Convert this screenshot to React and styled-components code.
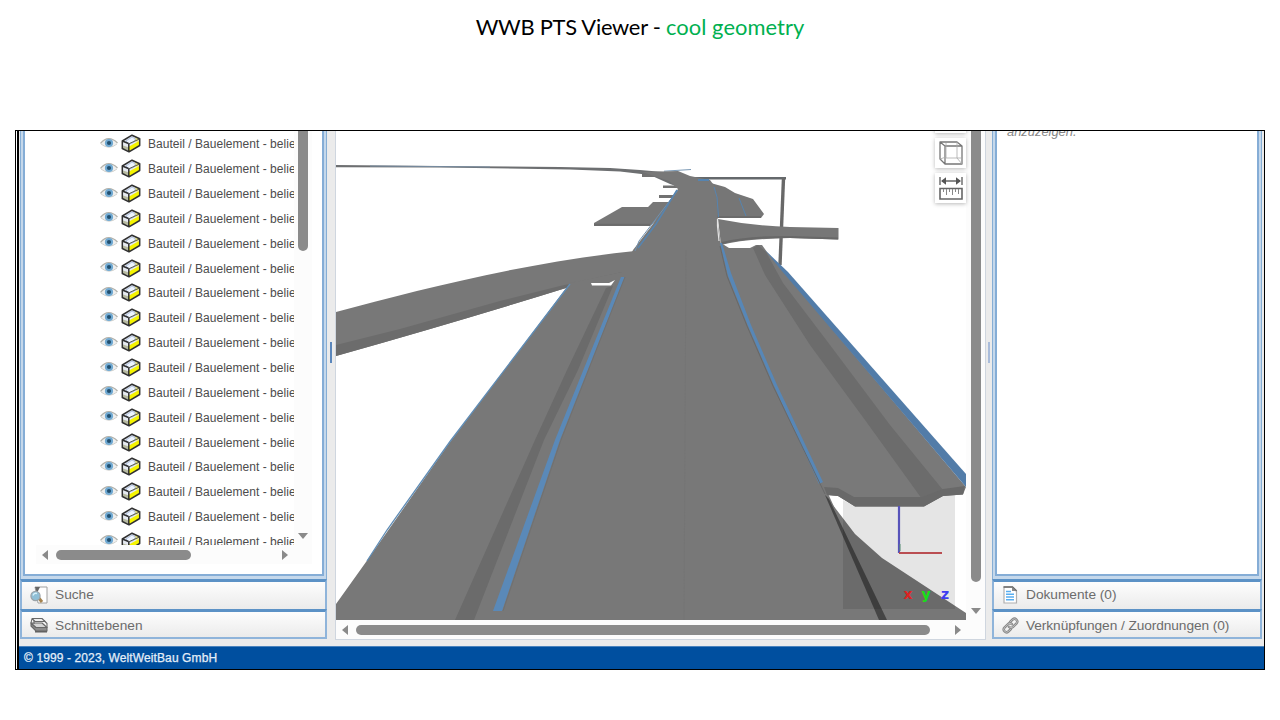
import React from "react";
import styled, { createGlobalStyle } from "styled-components";

const Global = createGlobalStyle`
  * { box-sizing: border-box; }
  body { margin: 0; background: #fff; overflow: hidden; font-family: "Liberation Sans", Arial, sans-serif; }
`;
const Slide = styled.main`
  width: 1280px; height: 720px; display: flex; flex-direction: column; align-items: center;
  padding-top: 11px; background: #fff;
`;
const Title = styled.h1`
  margin: 0 0 87px; height: 32px; font: 400 21.9px/31px Lato, Carlito, sans-serif;
  color: #000; white-space: nowrap; letter-spacing: -0.26px;
  span { color: #00b050; letter-spacing: 0.06px; }
`;
const Frame = styled.section`
  width: 1250px; height: 540px; border: 1px solid #000; display: flex; padding-left: 1px; overflow: hidden;
`;
const Portal = styled.div`
  flex: 1; min-width: 0; border-left: 2px solid #000; display: flex; flex-direction: column; background: #ebebeb;
`;
const Workspace = styled.div`height: 515px; display: flex; padding-left: 1px; background: #ebebeb;`;
const Footer = styled.footer`
  flex: 1; background: #004f9f; border-top: 1px solid #4b83bd; color: #e4eef8; font-size: 12px;
  line-height: 22px; padding-left: 5px; white-space: nowrap; letter-spacing: 0.11px;
  -webkit-text-stroke: 0.25px #e4eef8;
`;
const Side = styled.aside`width: ${(p) => p.$w}px; height: 508px; display: flex; flex-direction: column;`;
const Pane = styled.div`
  height: 448px; border: 1px solid #86aed5; border-top: 0; border-bottom: 0; background: #c5d8eb; padding: 0 2px 3px;
`;
const PaneInner = styled.div`
  height: 100%; border: 2px solid #85add6; border-top: 0; background: #fff; overflow: hidden;
`;
const Bar = styled.div`
  height: 30px; border: 2px solid #8fb4da; border-top: 3px solid #5c92c6; border-bottom: 0;
  background: linear-gradient(#fdfdfd, #ebebeb); display: flex; align-items: center; color: #6c6c6c;
  font-size: 13.7px; padding: 0 0 2px 8px; gap: ${(p) => p.$gap || 7}px; white-space: nowrap;
  letter-spacing: ${(p) => p.$ls || 0}px;
  &:last-child { border-bottom: 2px solid #8fb4da; padding-bottom: 0; padding-top: 1px; }
  svg { flex: none; }
`;
const TreeArea = styled.div`display: flex; height: 414px; padding-left: 75px;`;
const TreeList = styled.div`width: 194px; height: 414px; overflow: hidden; padding-top: 1px;`;
const TreeRow = styled.div`
  height: 24.85px; display: flex; align-items: center; white-space: nowrap; font-size: 12px; color: #4c4c4c;
  letter-spacing: 0.03px;
`;
const Eye = styled.svg`flex: none; width: 18px; height: 16px; margin-right: 3px; margin-top: -3px;`;
const Box = styled.svg`flex: none; width: 20px; height: 19px; margin: -1px 7px 0 0;`;
const VTrack = styled.div`
  width: ${(p) => p.$w || 18}px; background: #fcfcfc; display: flex; flex-direction: column; align-items: center;
  justify-content: space-between; padding-bottom: ${(p) => p.$pb || 6}px; padding-left: ${(p) => p.$pl || 0}px;
`;
const VThumb = styled.div`width: 10px; height: ${(p) => p.$h}px; background: #8b8b8b; border-radius: 0 0 5px 5px;`;
const HTrack = styled.div`
  height: ${(p) => p.$h}px; display: flex; align-items: center; background: #fcfcfc; margin-left: ${(p) => p.$ml || 0}px;
  width: ${(p) => p.$w}px; padding-left: 6px;
`;
const HThumb = styled.div`
  width: ${(p) => p.$w}px; height: 10px; border-radius: 5px; background: #8b8b8b; margin: 0 ${(p) => p.$mr}px 0 8px;
`;
const Arrow = styled.i`
  width: 0; height: 0; flex: none; border: 5px solid transparent;
  ${(p) => p.$d === "left" && "border-left: 0; border-right: 6px solid #8a8a8a;"}
  ${(p) => p.$d === "right" && "border-right: 0; border-left: 6px solid #8a8a8a;"}
  ${(p) => p.$d === "down" && "border-bottom: 0; border-top: 6px solid #8a8a8a;"}
`;
const Splitter = styled.div`
  width: ${(p) => p.$w}px; height: 100%; background: #ebebeb; display: flex; justify-content: center; padding-top: 211px;
`;
const Handle = styled.div`width: 2px; height: 21px; background: ${(p) => p.$c};`;
const Viewer = styled.div`
  width: 651px; height: 509px; background: #fff; border: 1px solid #cfd6df; border-top: 0; position: relative;
`;
const ViewRow = styled.div`display: flex; height: 489px;`;
const Tools = styled.div`
  position: absolute; left: 599px; top: -28px; display: flex; flex-direction: column; gap: 5px;
`;
const Tool = styled.button`
  width: 31px; height: 30px; padding: 0; border: 0; background: #fff; box-shadow: 0 1px 4px rgba(0,0,0,.28);
  display: flex; align-items: center; justify-content: center;
`;
const Hint = styled.p`
  margin: -9px 0 0 10px; font-size: 12.9px; line-height: 20px; font-style: italic; color: #868686;
`;

const EyeIcon = () => (
  <Eye viewBox="0 0 18 16">
    <path d="M.5 8.4Q9-.8 17.5 8Q9 15.5 .5 8.4Z" fill="#efefee" />
    <path d="M.5 8.4Q8.5-1 17.5 8" fill="none" stroke="#b2b2ac" strokeWidth="1.3" />
    <path d="M1 9Q9 15.5 17 9" fill="none" stroke="#d2d2ce" />
    <circle cx="9" cy="8" r="4.1" fill="#70a9d2" />
    <circle cx="9" cy="8" r="2.1" fill="#23506f" />
  </Eye>
);
const BoxIcon = () => (
  <Box viewBox="0 0 20 19">
    <path d="M1.2 7L11 1L18.8 4.8V11.5L8 18L1.2 14.5Z" fill="#e6eaf1" />
    <path d="M8 12.5L18.5 6.8V11.5L8 17.5Z" fill="#f5f400" />
    <path d="M2 11.5L8 13.5V17.5L2 14.5Z" fill="#b7baa2" />
    <path d="M12 7L15 2.8L18.5 5L17 8Z" fill="#eee783" />
    <path d="M5 7L11 3L14.5 5L12.5 8.5L8 10Z" fill="#edf4ff" stroke="#9aafd4" strokeWidth=".7" />
    <path d="M1.3 7L11 1.2L18.7 4.8V11.5L8 17.8L1.3 14.5ZM1.3 7L7.5 9.5M7.8 9.5V17.5" fill="none" stroke="#303030" strokeWidth="1.5" strokeLinejoin="round" />
    <path d="M7.8 9.8L18.5 5" stroke="#55564c" />
  </Box>
);
const SearchIcon = () => (
  <svg width="18" height="18" viewBox="0 0 18 18">
    <path d="M5 1H17V17H8Z" fill="#fff" stroke="#a0a0a0" />
    <path d="M5 1H10L7 7Z" fill="#666" />
    <path d="M8 11L12 16" stroke="#a5834f" strokeWidth="3" />
    <circle cx="5.5" cy="10" r="4.6" fill="#8fbfd6" stroke="#9ba3a8" strokeWidth="1.2" />
    <path d="M3 9.5Q4 6.5 7 7.5" stroke="#d8f2fb" strokeWidth="1.4" fill="none" />
  </svg>
);
const LayersIcon = () => (
  <svg width="18" height="16" viewBox="0 0 18 16" fill="none" stroke="#686868" strokeWidth="1.1" strokeLinejoin="round">
    <path d="M1 6V9L6 14H17V10.5H6Z" fill="#8b8b8b" />
    <path d="M6 10.5L1 6H12L17 10.5Z" fill="#d5d5d5" />
    <path d="M4 7V3.5H14L17 6.5V10.5" />
    <path d="M1 6L2 1.5H12L15 4.5H5L2 1.5" fill="#eee" />
    <path d="M5 14.8H17" stroke="#5a5a5a" strokeWidth="1.4" />
  </svg>
);
const DocumentIcon = () => (
  <svg width="16" height="18" viewBox="0 0 16 18">
    <path d="M2 1H10.5L14.5 4.5V17H2Z" fill="#fff" stroke="#b0b0b0" strokeWidth="1.2" />
    <path d="M1.5 1H10.5L14.5 5" stroke="#666" strokeWidth="1.4" fill="none" />
    <path d="M10 1V5H14" fill="#888" />
    <path d="M4 5.5H9M4 8.3H12M4 11H12M4 13.7H12" stroke="#59aef0" strokeWidth="1.6" />
  </svg>
);
const LinkIcon = () => (
  <svg width="17" height="17" viewBox="0 0 24 24" fill="none" strokeLinecap="round" strokeLinejoin="round">
    <g stroke="#888" strokeWidth="3.6"><path d="M10 14a4 4 0 0 0 5.5 0l5-5a3.9 3.9 0 0 0-5.5-5.5l-3.5 3.5M14 10a4 4 0 0 0-5.5 0l-5 5a3.9 3.9 0 0 0 5.5 5.5l3.5-3.5" /></g>
    <g stroke="#ddd" strokeWidth=".9"><path d="M10 14a4 4 0 0 0 5.5 0l5-5a3.9 3.9 0 0 0-5.5-5.5l-3.5 3.5M14 10a4 4 0 0 0-5.5 0l-5 5a3.9 3.9 0 0 0 5.5 5.5l3.5-3.5" /></g>
  </svg>
);
const CubeIcon = () => (
  <svg width="24" height="24" viewBox="0 0 24 24" fill="none" stroke="#777" strokeLinejoin="round">
    <path d="M1 1H18L23 5V23H6L1 18ZM1 1L6 5H23M6 5V23" strokeWidth="1.3" />
    <path d="M7 2V17H22M1 18L7 16M18 1V17L23 23" stroke="#aaa" strokeWidth=".8" />
  </svg>
);
const MeasureIcon = () => (
  <svg width="24" height="24" viewBox="0 0 24 24" fill="none" stroke="#666">
    <path d="M1 1V9M23 1V9M3 5H21" strokeWidth="1.4" />
    <path d="M2 5L7 1.2V8.8ZM22 5L17 1.2V8.8Z" fill="#555" stroke="none" />
    <path d="M1 12.5H23V23H1Z" strokeWidth="1.6" />
    <path d="M4.5 13V16M7.5 13V19M10.5 13V16M13.5 13V19M16.5 13V16M19.5 13V18" stroke="#888" />
  </svg>
);

const Scene = () => (
  <svg width="630" height="489" viewBox="336 131 630 489">
    <path d="M336 165L440 166L560 167L610 168L640 170L663 172L682 188L670 184L650 175L620 171.5L570 169.5L440 167.5L336 167.3Z" fill="#6d6f71" />
    <path d="M370 166L490 167" stroke="#7893ad" strokeWidth=".8" />
    <path d="M642 174H666V177H642ZM663 185.5H680V188H663ZM659 195H678V198H659Z" fill="#717171" />
    <path d="M664 171.2L691 169.5" stroke="#7b99b5" />
    <path d="M690 178.3H786" stroke="#65696c" strokeWidth="2.4" />
    <path d="M783.5 178L780 265" stroke="#686868" strokeWidth="3.4" />
    <path d="M594 223L622 207H648L653 202H675L650 226H594Z" fill="#777" />
    <path d="M594 224.8H650" stroke="#6b6b6b" strokeWidth="2" />
    <path d="M700 180L725 187L735 193L753 199L764 214L761 218H745L716 217Z" fill="#767676" />
    <path d="M716 217H761" stroke="#6b6b6b" strokeWidth="2" />
    <path d="M739 198L746 216" stroke="#5684ae" />
    <path d="M718 219Q753 226 790 227L838.5 228V239.5L790 238Q745 239 721 245Z" fill="#777" />
    <path d="M722 243Q748 236.5 790 237L838 238.5" stroke="#686868" strokeWidth="2" fill="none" />
    <path d="M336 312C415 291 520 263 635 251L632 278L566 288Q460 321 336 356Z" fill="#787878" />
    <path d="M336 345L400 329L500 301L560 286L622 272V280L566 288Q460 321 336 356Z" fill="#6c6c6c" />
    <path d="M826 496L855 534L882 558L966 613V620H836L780 500Z" fill="#777" />
    <path d="M642 172L678 171L690 176L710 180L716 188L718 225L721 245L732 275L750 325L825 487L886 620H336V604L366 562L380 542L450 442L570 283L622 272L633 250L650 228L678 189L669 181Z" fill="#787878" />
    <path d="M686 250L684 620" stroke="#757575" strokeWidth="1" />
    <path d="M635 251L639 241L678 190" fill="none" stroke="#7090ae" />
    <path d="M638 248L656 224L677 190" fill="none" stroke="#5684b0" strokeWidth="1.5" />
    <path d="M698 180H709" stroke="#5684b0" strokeWidth="2" />
    <path d="M714 187L717 197L718.5 217" fill="none" stroke="#5684b0" />
    <path d="M717.5 219V226L719 241" fill="none" stroke="#e5e5e5" strokeWidth="1.2" />
    <path d="M591 283H609L615 280L611 285.4H592Z" fill="#fff" />
    <path d="M455 620L535 440L567 370L606 288L613 286L578 370L544 440L474 620Z" fill="#6b6b6b" />
    <path d="M493 611H502L560 440L624.5 277H621L555 440Z" fill="#5a89b8" />
    <path d="M503 611L561 440L625 277" fill="none" stroke="#6e6e6e" strokeWidth=".8" />
    <path d="M570 284L450 441.5L387 530L367 561" fill="none" stroke="#5f8cb5" strokeWidth="1.3" />
    <path d="M721 243L729 248H750L756 245H762L767 252L966 487L963 494.5L943 496L924 506.5H855L838 496L827 495L822 484L774 386L748 326L728 276Z" fill="#797979" />
    <path d="M753 248L758 245L766 252L783 283L830 345L890 425L943 490L922 499L865 420L810 345L765 275Z" fill="#6c6c6c" />
    <path d="M824 487L838 488L854 497H922L943 489L965 486L963 494.5L943 496L924 506.5H855L838 496L827 495Z" fill="#696969" />
    <path d="M765 250L788 272L966 474V487L781 270Z" fill="#527ca8" />
    <path d="M720 243L722 243L731 273L751 325L777 385L823 482L819 484L774 386L748 326L728 276Z" fill="#5787b7" />
    <path d="M720 246L727 276L747 326L773 386L825 494" stroke="#686868" strokeWidth="1" fill="none" />
    <path d="M825 495L829 499L887 620H879Z" fill="#454545" />
    <path d="M843 500L855 506.5H924L943 496L955 495.3V609H843Z" fill="rgba(0,0,0,.1)" />
    <path d="M899 506V553" stroke="#5753ba" strokeWidth="2.2" />
    <path d="M900 544V551" stroke="#5b9471" />
    <path d="M899 553H942" stroke="#ba4e52" strokeWidth="2" />
    <g fontFamily="DejaVu Sans" fontSize="14" fontWeight="700" textAnchor="middle">
      <text x="908" y="599" fill="#dc2222">x</text>
      <text x="926" y="599" fill="#16e116">y</text>
      <text x="945" y="599" fill="#3d3df0">z</text>
    </g>
  </svg>
);

export default function App() {
  return (
    <Slide>
      <Global />
      <Title>WWB PTS Viewer - <span>cool geometry</span></Title>
      <Frame>
        <Portal>
          <Workspace>
            <Side $w={307}>
              <Pane><PaneInner>
                <TreeArea>
                  <TreeList>
                    {Array.from({ length: 17 }, (_, i) => (
                      <TreeRow key={i}><EyeIcon /><BoxIcon />Bauteil / Bauelement - belie</TreeRow>
                    ))}
                  </TreeList>
                  <VTrack><VThumb $h={120} /><Arrow $d="down" /></VTrack>
                </TreeArea>
                <HTrack $h={19} $w={276} $ml={11}>
                  <Arrow $d="left" /><HThumb $w={135} $mr={91} /><Arrow $d="right" />
                </HTrack>
              </PaneInner></Pane>
              <Bar><SearchIcon />Suche</Bar>
              <Bar><LayersIcon />Schnittebenen</Bar>
            </Side>
            <Splitter $w={8}><Handle $c="#5b87bc" /></Splitter>
            <Viewer>
              <ViewRow>
                <Scene />
                <VTrack $w={19} $pb={6} $pl={1}><VThumb $h={451} /><Arrow $d="down" /></VTrack>
              </ViewRow>
              <HTrack $h={19} $w={649}>
                <Arrow $d="left" /><HThumb $w={574} $mr={25} /><Arrow $d="right" />
              </HTrack>
              <Tools><Tool /><Tool><CubeIcon /></Tool><Tool><MeasureIcon /></Tool></Tools>
            </Viewer>
            <Splitter $w={6}><Handle $c="#a9bcdb" /></Splitter>
            <Side $w={270}>
              <Pane><PaneInner><Hint>anzuzeigen.</Hint></PaneInner></Pane>
              <Bar $gap={8}><DocumentIcon />Dokumente (0)</Bar>
              <Bar $ls={-0.07}><LinkIcon />Verknüpfungen / Zuordnungen (0)</Bar>
            </Side>
          </Workspace>
          <Footer>© 1999 - 2023, WeltWeitBau GmbH</Footer>
        </Portal>
      </Frame>
    </Slide>
  );
}
